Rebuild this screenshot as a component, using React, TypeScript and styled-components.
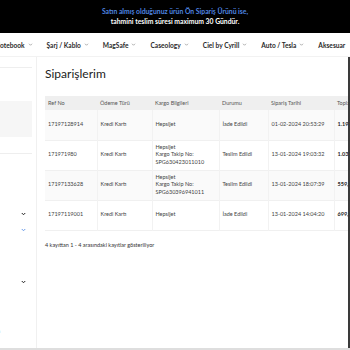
import React from "react";
import styled, { createGlobalStyle } from "styled-components";

const Global = createGlobalStyle`
  html, body { margin: 0; padding: 0; background: #fff; }
  body { font-family: "Lato", "Noto Sans", sans-serif; width: 350px; height: 350px; overflow: hidden; }
  * { box-sizing: border-box; }
`;

const Page = styled.div`
  width: 350px;
  height: 350px;
  display: flex;
  flex-direction: column;
  overflow: hidden;
  position: relative;
`;

const TopBar = styled.div`
  height: 33px;
  background: #000;
  display: flex;
  flex-direction: column;
  align-items: center;
  justify-content: center;
  gap: 3px;
  font-size: 6.8px;
  font-weight: 700;
  line-height: 7px;
`;

const TopLine = styled.div<{ $blue?: boolean }>`
  color: ${(p) => (p.$blue ? "#4f86e0" : "#fff")};
  white-space: nowrap;
`;

const Nav = styled.nav`
  height: 24px;
  display: flex;
  align-items: center;
  gap: 14px;
  margin-left: -5px;
  white-space: nowrap;
  border-bottom: 1px solid #f2f2f2;
`;

const NavItem = styled.div`
  display: flex;
  align-items: center;
  gap: 3px;
  font-size: 6.6px;
  font-weight: 700;
  color: #2a2a2a;
  flex-shrink: 0;
`;

const Caret = styled.svg`
  width: 5px;
  height: 5px;
`;

const Body = styled.div`
  flex: 1;
  display: flex;
  min-height: 0;
  border-bottom: 2px solid #dedede;
`;

const Sidebar = styled.aside`
  width: 37px;
  flex-shrink: 0;
  border-right: 1px solid #f0f0f0;
  display: flex;
  flex-direction: column;
  padding-top: 10px;
`;

const SideRule = styled.div`
  height: 1px;
  background: #eeeeee;
  margin-right: 4px;
`;

const SideBox = styled.div`
  height: 36px;
  margin-top: 33px;
  margin-right: 4px;
  background: #f6f6f6;
`;

const SideSpacer = styled.div<{ $h: number }>`
  height: ${(p) => p.$h}px;
  flex-shrink: 0;
`;

const SideChevron = styled.div<{ $blue?: boolean }>`
  height: 8px;
  display: flex;
  align-items: center;
  justify-content: flex-end;
  padding-right: 10px;
  color: ${(p) => (p.$blue ? "#6a9be8" : "#222")};
`;

const SideText = styled.div`
  font-size: 5.5px;
  color: #333;
  margin-left: -3px;
`;

const Main = styled.main`
  flex: 1;
  min-width: 0;
  overflow: hidden;
  padding: 9px 0 0 8px;
  border-right: 2px solid #3a3a3a;
`;

const Title = styled.h1`
  margin: 0 0 14px 0;
  font-size: 12px;
  font-weight: 400;
  color: #222;
  line-height: 16px;
`;

const Table = styled.table`
  border-collapse: collapse;
  table-layout: fixed;
  width: 330px;
  font-size: 5.5px;
  color: #444;
`;

const Th = styled.th<{ $w: number }>`
  width: ${(p) => p.$w}px;
  height: 14px;
  background: #efefef;
  text-align: left;
  font-weight: 400;
  padding: 0 3px;
  color: #555;
`;

const Tr = styled.tr<{ $alt?: boolean }>`
  background: ${(p) => (p.$alt ? "#fafafa" : "#fff")};
  border-bottom: 1px solid #f0f0f0;
`;

const Td = styled.td<{ $bold?: boolean }>`
  height: 30px;
  padding: 0 3px;
  line-height: 7.5px;
  border-left: 1px solid #f2f2f2;
  font-weight: ${(p) => (p.$bold ? 700 : 400)};
  color: ${(p) => (p.$bold ? "#222" : "#444")};
  white-space: nowrap;
  &:first-child { border-left: none; }
`;

const Info = styled.div`
  margin-top: 11px;
  font-size: 5.5px;
  color: #333;
`;

const Chevron = () => (
  <Caret viewBox="0 0 10 10">
    <path d="M2 3.5 L5 6.5 L8 3.5" fill="none" stroke="#777" strokeWidth="1.2" />
  </Caret>
);

const SideCaret = () => (
  <svg width="5" height="4" viewBox="0 0 10 8">
    <path d="M1.5 2 L5 5.5 L8.5 2" fill="none" stroke="currentColor" strokeWidth="2" />
  </svg>
);

const navItems = ["Notebook", "Şarj / Kablo", "MagSafe", "Caseology", "Ciel by Cyrill", "Auto / Tesla", "Aksesuar"];

const rows = [
  { ref: "17197128914", pay: "Kredi Kartı", cargo: ["Hepsijet"], status: "İade Edildi", date: "01-02-2024 20:53:29", total: "1.199,00" },
  { ref: "171971980", pay: "Kredi Kartı", cargo: ["Hepsijet", "Kargo Takip No:", "SPG630423011010"], status: "Teslim Edildi", date: "13-01-2024 19:03:32", total: "1.039,00" },
  { ref: "17197133628", pay: "Kredi Kartı", cargo: ["Hepsijet", "Kargo Takip No:", "SPG630396941011"], status: "Teslim Edildi", date: "13-01-2024 18:07:39", total: "559,00" },
  { ref: "17197119001", pay: "Kredi Kartı", cargo: ["Hepsijet"], status: "İade Edildi", date: "13-01-2024 14:04:20", total: "699,00" },
];

export default function App() {
  return (
    <Page>
      <Global />
      <TopBar>
        <TopLine $blue>Satın almış olduğunuz ürün Ön Sipariş Ürünü ise,</TopLine>
        <TopLine>tahmini teslim süresi maximum 30 Gündür.</TopLine>
      </TopBar>
      <Nav>
        {navItems.map((n, i) => (
          <NavItem key={n}>
            {n}
            {i < navItems.length - 1 && <Chevron />}
          </NavItem>
        ))}
      </Nav>
      <Body>
        <Sidebar>
          <SideRule />
          <SideBox />
          <SideSpacer $h={16} />
          <SideRule />
          <SideSpacer $h={56} />
          <SideChevron><SideCaret /></SideChevron>
          <SideSpacer $h={8} />
          <SideChevron $blue><SideCaret /></SideChevron>
          <SideSpacer $h={44} />
          <SideChevron><SideCaret /></SideChevron>
          <SideSpacer $h={42} />
          <SideText>n</SideText>
        </Sidebar>
        <Main>
          <Title>Siparişlerim</Title>
          <Table>
            <thead>
              <tr>
                <Th $w={52}>Ref No</Th>
                <Th $w={55}>Ödeme Türü</Th>
                <Th $w={67}>Kargo Bilgileri</Th>
                <Th $w={49}>Durumu</Th>
                <Th $w={66}>Sipariş Tarihi</Th>
                <Th $w={41}>Toplam</Th>
              </tr>
            </thead>
            <tbody>
              {rows.map((r, i) => (
                <Tr key={r.ref} $alt={i % 2 === 0}>
                  <Td>{r.ref}</Td>
                  <Td>{r.pay}</Td>
                  <Td>
                    {r.cargo.map((c) => (
                      <div key={c}>{c}</div>
                    ))}
                  </Td>
                  <Td>{r.status}</Td>
                  <Td>{r.date}</Td>
                  <Td $bold>{r.total}</Td>
                </Tr>
              ))}
            </tbody>
          </Table>
          <Info>4 kayıttan 1 - 4 arasındaki kayıtlar gösteriliyor</Info>
        </Main>
      </Body>
    </Page>
  );
}
